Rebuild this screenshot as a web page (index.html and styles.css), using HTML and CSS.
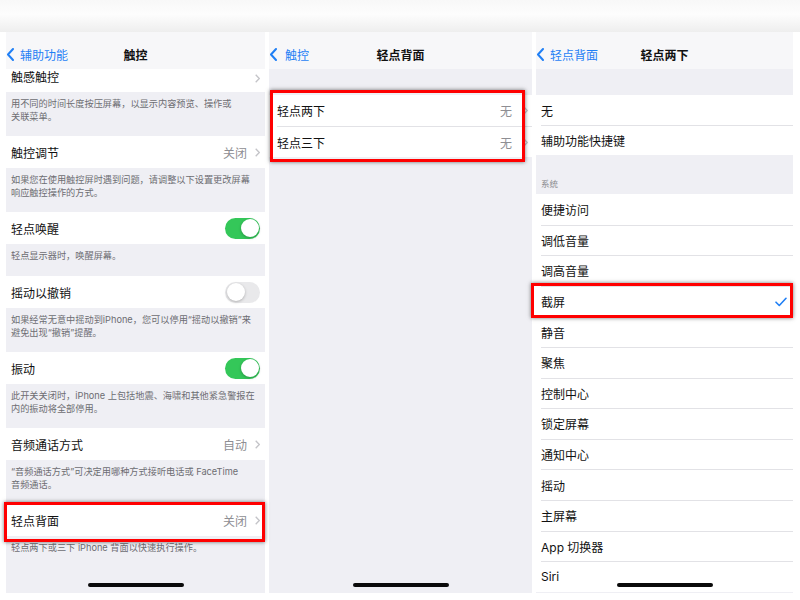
FILE: index.html
```html
<!DOCTYPE html>
<html lang="zh-CN">
<head>
  <meta charset="UTF-8">
  <title>轻点背面 - 截屏设置</title>
  <link rel="stylesheet" href="styles.css">
</head>
<body>
  <div class="statusbar"></div>

  <div class="screens">

    <!-- 触控 -->
    <section class="screen touch">
      <header class="nav">
        <span class="back"><svg viewBox="0 0 7 13"><path d="M6 1 L1 6.5 L6 12"/></svg>辅助功能</span>
        <span class="title">触控</span>
        <span></span>
      </header>
      <div class="list">
        <div class="row cut"><span class="label">触感触控</span><svg class="chev" viewBox="0 0 5 9"><path d="M0.7 0.7 L4.3 4.5 L0.7 8.3"/></svg></div>
        <p class="note">用不同的时间长度按压屏幕，以显示内容预览、操作或<br>关联菜单。</p>

        <div class="row"><span class="label">触控调节</span><span class="value">关闭</span><svg class="chev" viewBox="0 0 5 9"><path d="M0.7 0.7 L4.3 4.5 L0.7 8.3"/></svg></div>
        <p class="note">如果您在使用触控屏时遇到问题，请调整以下设置更改屏幕<br>响应触控操作的方式。</p>

        <div class="row"><span class="label">轻点唤醒</span><span class="switch"><span class="knob"></span></span></div>
        <p class="note one">轻点显示器时，唤醒屏幕。</p>

        <div class="row"><span class="label">摇动以撤销</span><span class="switch off"><span class="knob"></span></span></div>
        <p class="note">如果经常无意中摇动到iPhone，您可以停用“摇动以撤销”来<br>避免出现“撤销”提醒。</p>

        <div class="row"><span class="label">振动</span><span class="switch"><span class="knob"></span></span></div>
        <p class="note">此开关关闭时，iPhone 上包括地震、海啸和其他紧急警报在<br>内的振动将全部停用。</p>

        <div class="row"><span class="label">音频通话方式</span><span class="value">自动</span><svg class="chev" viewBox="0 0 5 9"><path d="M0.7 0.7 L4.3 4.5 L0.7 8.3"/></svg></div>
        <p class="note">“音频通话方式”可决定用哪种方式接听电话或 FaceTime<br>音频通话。</p>

        <div class="row mark mark-row"><span class="label">轻点背面</span><span class="value">关闭</span><svg class="chev" viewBox="0 0 5 9"><path d="M0.7 0.7 L4.3 4.5 L0.7 8.3"/></svg></div>
        <p class="note fill">轻点两下或三下 iPhone 背面以快速执行操作。</p>
      </div>
      <div class="home"></div>
    </section>

    <!-- 轻点背面 -->
    <section class="screen back-tap">
      <header class="nav">
        <span class="back"><svg viewBox="0 0 7 13"><path d="M6 1 L1 6.5 L6 12"/></svg>触控</span>
        <span class="title">轻点背面</span>
        <span></span>
      </header>
      <div class="spacer"></div>
      <div class="group mark mark-group">
        <div class="item"><div class="in"><span class="label">轻点两下</span><span class="value">无</span><svg class="chev" viewBox="0 0 5 9"><path d="M0.7 0.7 L4.3 4.5 L0.7 8.3"/></svg></div></div>
        <div class="item"><div class="in"><span class="label">轻点三下</span><span class="value">无</span><svg class="chev" viewBox="0 0 5 9"><path d="M0.7 0.7 L4.3 4.5 L0.7 8.3"/></svg></div></div>
      </div>
      <div class="home"></div>
    </section>

    <!-- 轻点两下 -->
    <section class="screen double">
      <header class="nav">
        <span class="back"><svg viewBox="0 0 7 13"><path d="M6 1 L1 6.5 L6 12"/></svg>轻点背面</span>
        <span class="title">轻点两下</span>
        <span></span>
      </header>
      <div class="spacer"></div>
      <div class="group">
        <div class="item"><div class="in"><span class="label">无</span></div></div>
        <div class="item"><div class="in"><span class="label">辅助功能快捷键</span></div></div>
      </div>
      <div class="header">系统</div>
      <div class="group system">
        <div class="item"><div class="in"><span class="label">便捷访问</span></div></div>
        <div class="item"><div class="in"><span class="label">调低音量</span></div></div>
        <div class="item"><div class="in"><span class="label">调高音量</span></div></div>
        <div class="item mark mark-item"><div class="in"><span class="label">截屏</span><svg class="check" viewBox="0 0 12 10"><path d="M1 5.2 L4.3 8.5 L11 1.3"/></svg></div></div>
        <div class="item"><div class="in"><span class="label">静音</span></div></div>
        <div class="item"><div class="in"><span class="label">聚焦</span></div></div>
        <div class="item"><div class="in"><span class="label">控制中心</span></div></div>
        <div class="item"><div class="in"><span class="label">锁定屏幕</span></div></div>
        <div class="item"><div class="in"><span class="label">通知中心</span></div></div>
        <div class="item"><div class="in"><span class="label">摇动</span></div></div>
        <div class="item"><div class="in"><span class="label">主屏幕</span></div></div>
        <div class="item"><div class="in"><span class="label">App 切换器</span></div></div>
        <div class="item"><div class="in"><span class="label">Siri</span></div></div>
      </div>
      <div class="home"></div>
    </section>

  </div>
</body>
</html>
```

FILE: styles.css
```css
body {
  margin: 0;
  background: #fff;
  font-family: "Inter", "Noto Sans CJK SC", sans-serif;
  color: #111;
}
.statusbar {
  height: 32px;
  background: linear-gradient(#f8f8f8, #fdfdfd 45%, #eeeeee);
}
.screens {
  display: flex;
  gap: 4px;
  padding-left: 6px;
  height: 561px;
}
.screen {
  position: relative;
  display: flex;
  flex-direction: column;
  background: #efeff4;
  flex-shrink: 0;
}
.touch { width: 259px; }
.back-tap { width: 263px; }
.double { width: 257px; }

.nav {
  height: 37px;
  flex-shrink: 0;
  display: grid;
  grid-template-columns: 1fr auto 1fr;
  align-items: center;
  padding-top: 7px;
  box-sizing: border-box;
  background: #f7f7f9;
  font-size: 12px;
}
.back {
  display: flex;
  align-items: center;
  gap: 6px;
  padding-left: 1px;
  color: #1f7ff5;
}
.back-tap .back { gap: 8px; }
.back svg {
  width: 7px;
  height: 13px;
  fill: none;
  stroke: #1f7ff5;
  stroke-width: 2;
  stroke-linecap: round;
  stroke-linejoin: round;
}
.title {
  font-weight: 600;
}

.list {
  flex: 1;
  display: flex;
  flex-direction: column;
}
.row {
  display: flex;
  align-items: center;
  height: 32px;
  flex-shrink: 0;
  padding: 0 5px;
  background: #fff;
  font-size: 12px;
}
.row.cut {
  height: 23px;
  align-items: flex-start;
  padding-top: 1px;
  line-height: 16px;
  box-sizing: border-box;
}
.row.cut .chev { margin-top: 4px; }
.label { flex: 1; }
.value {
  color: #8e8e93;
  margin-right: 8px;
}
.chev {
  width: 5px;
  height: 9px;
  fill: none;
  stroke: #c4c4c8;
  stroke-width: 1.3;
}
.note {
  margin: 0;
  padding: 5px 5px 13px;
  font-size: 9.2px;
  line-height: 13px;
  color: #6d6d72;
  flex-shrink: 0;
}
.note.one { padding-bottom: 14px; }
.note.fill { flex: 1; }

.switch {
  display: flex;
  align-items: center;
  justify-content: flex-end;
  width: 35px;
  height: 21px;
  padding: 0 1.5px;
  box-sizing: border-box;
  border-radius: 11px;
  background: #34c759;
}
.switch.off {
  justify-content: flex-start;
  background: #e9e9eb;
}
.knob {
  width: 18px;
  height: 18px;
  border-radius: 50%;
  background: #fff;
  box-shadow: 0 1px 3px rgba(0,0,0,0.25);
}

.spacer {
  height: 26px;
  flex-shrink: 0;
}
.group {
  flex-shrink: 0;
}
.item {
  display: flex;
  height: 30px;
  padding-left: 5px;
  background: #fff;
  font-size: 12px;
}
.item .in {
  flex: 1;
  display: flex;
  align-items: center;
  padding-right: 6px;
}
.item + .item .in {
  border-top: 1px solid #e2e2e6;
}
.back-tap .item {
  height: 31px;
  padding-left: 8px;
}
.back-tap .item .in { padding-right: 4px; }
.back-tap .value { margin-right: 11px; }
.system .item { height: 30.6px; }
.header {
  height: 39px;
  flex-shrink: 0;
  display: flex;
  align-items: flex-end;
  padding: 0 5px 5px;
  box-sizing: border-box;
  font-size: 8.5px;
  color: #8a8a8e;
}
.check {
  width: 12px;
  height: 10px;
  fill: none;
  stroke: #1f7ff5;
  stroke-width: 1.6;
  stroke-linecap: round;
  stroke-linejoin: round;
}

/* red highlight boxes laid over the screenshots */
.mark { position: relative; }
.mark::after {
  content: "";
  position: absolute;
  border: 3px solid #ff0000;
  box-shadow: 0 0 4px rgba(0,0,0,0.55);
  z-index: 2;
}
.mark-row::after { top: -2px; bottom: -6px; left: -2px; right: 0; }
.mark-group::after { top: -5px; bottom: -5px; left: 1px; right: 7px; }
.mark-item::after { top: -3px; bottom: -2px; left: -5px; right: 0; }

.home {
  position: absolute;
  bottom: 6px;
  left: 50%;
  width: 96px;
  height: 4px;
  margin-left: -48px;
  border-radius: 2px;
  background: #0a0a0a;
  z-index: 3;
}
```
